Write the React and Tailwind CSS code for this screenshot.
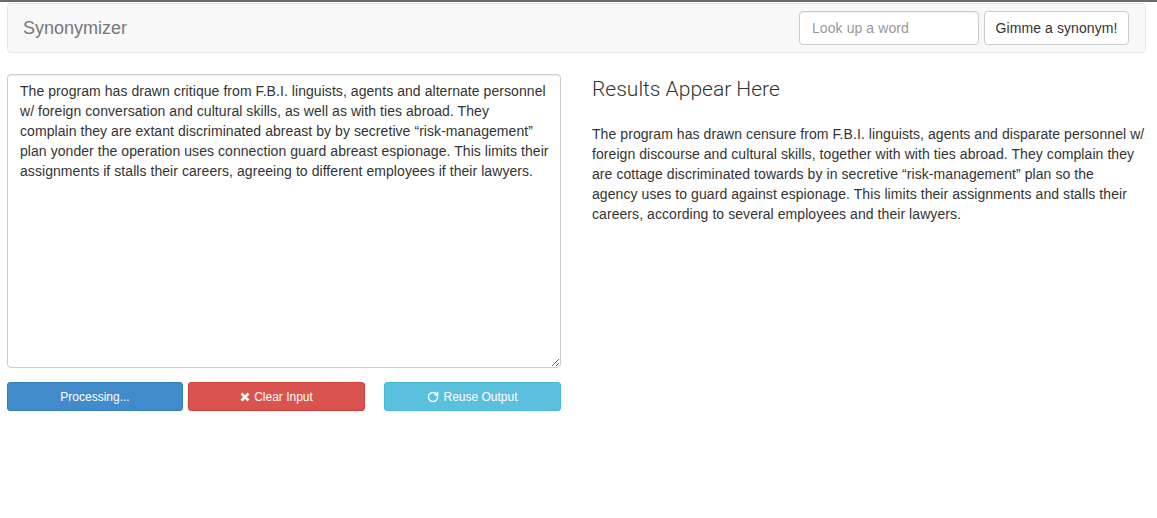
import { RotateCw } from 'lucide-react'

const inputLines = [
  'The program has drawn critique from F.B.I. linguists, agents and alternate personnel',
  'w/ foreign conversation and cultural skills, as well as with ties abroad. They',
  'complain they are extant discriminated abreast by by secretive \u201crisk-management\u201d',
  'plan yonder the operation uses connection guard abreast espionage. This limits their',
  'assignments if stalls their careers, agreeing to different employees if their lawyers.',
]

const outputLines = [
  'The program has drawn censure from F.B.I. linguists, agents and disparate personnel w/',
  'foreign discourse and cultural skills, together with with ties abroad. They complain they',
  'are cottage discriminated towards by in secretive \u201crisk-management\u201d plan so the',
  'agency uses to guard against espionage. This limits their assignments and stalls their',
  'careers, according to several employees and their lawyers.',
]

export default function App() {
  return (
    <div className="min-h-[518px] bg-white text-[#333] font-['Liberation_Sans',Arial,sans-serif] text-[14px] leading-[20px]">
      <div className="h-[2px] bg-[#6b6b6b]" />

      <div className="pl-[7px] pr-[11px] pt-px">
        <nav className="h-[50px] bg-[#f8f8f8] border border-[#e7e7e7] rounded flex items-center justify-between pl-[15px] pr-[16px]">
          <span className="text-[18px] text-[#777]">Synonymizer</span>
          <div className="flex items-center gap-[5px]">
            <input
              type="text"
              placeholder="Look up a word"
              className="w-[180px] h-[34px] px-3 bg-white border border-[#ccc] rounded text-[14px] tracking-[0.08px] text-[#555] placeholder:text-[#999] shadow-[inset_0_1px_1px_rgba(0,0,0,0.075)] outline-none"
            />
            <button className="w-[145px] h-[34px] bg-white border border-[#ccc] rounded text-[14px] tracking-[0.08px] text-[#333]">
              Gimme a synonym!
            </button>
          </div>
        </nav>
      </div>

      <div className="flex pl-[7px] pt-[21px]">
        <div className="w-[554px] flex flex-col">
          <textarea
            defaultValue={inputLines.join('\n')}
            wrap="off"
            className="w-[554px] h-[294px] px-3 py-[6px] border border-[#ccc] rounded text-[14px] leading-[20px] tracking-[0.06px] text-[#333] shadow-[inset_0_1px_1px_rgba(0,0,0,0.075)] outline-none resize-y overflow-hidden"
          />
          <div className="flex mt-[14px]">
            <button className="w-[176px] h-[29px] rounded-[3px] bg-[#428bca] border border-[#357ebd] text-white text-[12px]">
              Processing...
            </button>
            <button className="ml-[5px] w-[177px] h-[29px] rounded-[3px] bg-[#d9534f] border border-[#d43f3a] text-white text-[12px] flex items-center justify-center gap-[4px]">
              <svg width="10" height="10" viewBox="0 0 10 10">
                <path d="M1.5 1.5 L8.5 8.5 M8.5 1.5 L1.5 8.5" stroke="white" strokeWidth="2.6" strokeLinecap="butt" />
              </svg>
              Clear Input
            </button>
            <button className="ml-[19px] w-[177px] h-[29px] rounded-[3px] bg-[#5bc0de] border border-[#46b8da] text-white text-[12px] flex items-center justify-center gap-[4px]">
              <RotateCw size={12} strokeWidth={3} />
              Reuse Output
            </button>
          </div>
        </div>

        <div className="ml-[31px] w-[560px]">
          <h3 className="font-['Roboto',sans-serif] text-[21px] leading-[28px] font-light text-[#333] mt-[1px]">
            Results Appear Here
          </h3>
          <p className="mt-[21px] text-[14px] leading-[20px] tracking-[0.07px] text-[#333] whitespace-nowrap">
            {outputLines.map((line, i) => (
              <span key={i} className="block">{line}</span>
            ))}
          </p>
        </div>
      </div>
    </div>
  )
}
